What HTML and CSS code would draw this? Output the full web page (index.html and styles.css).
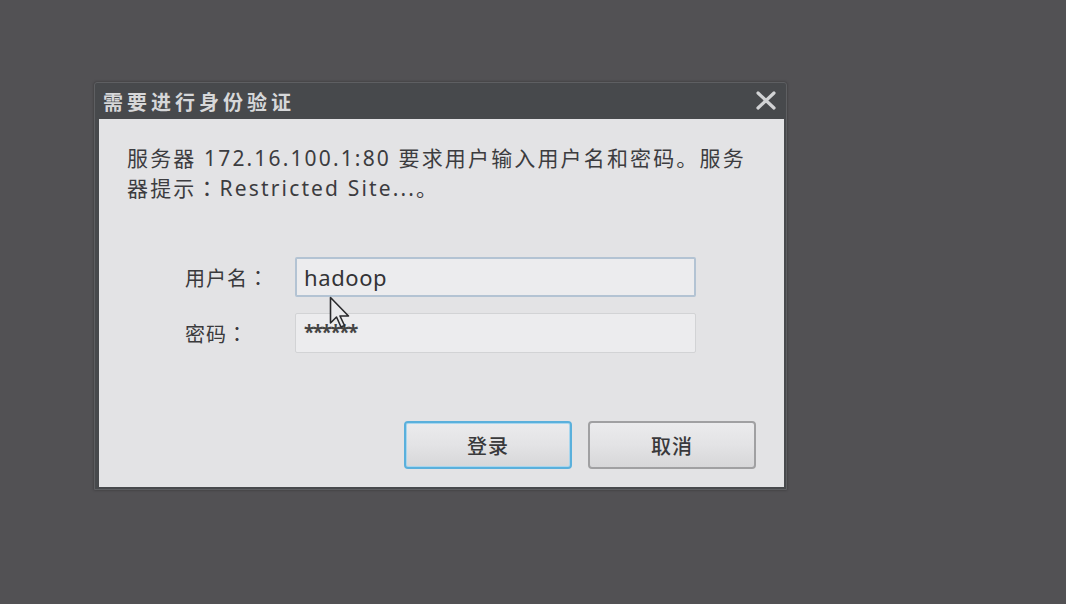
FILE: index.html
```html
<!DOCTYPE html>
<html lang="zh-CN">
<head>
<meta charset="utf-8">
<title>需要进行身份验证</title>
<link rel="stylesheet" href="styles.css">
</head>
<body>
<div class="dialog">
  <div class="titlebar">
    <span class="title">需要进行身份验证</span>
    <span class="close">
      <svg width="20" height="19" viewBox="0 0 20 19"><path d="M2 2 L18 17 M18 2 L2 17" stroke="#d2d3d5" stroke-width="3.2" stroke-linecap="round"/></svg>
    </span>
  </div>
  <div class="content">
    <p class="message"><span class="line">服务器 172.16.100.1:80 要求用户输入用户名和密码。服务</span><span class="line">器提示<span class="colon" lang="zh-TW">：</span>Restricted Site...。</span></p>
    <div class="form">
      <div class="row">
        <label class="label">用户名<span class="colon" lang="zh-TW">：</span></label>
        <div class="input focused">hadoop</div>
      </div>
      <div class="row">
        <label class="label">密码<span class="colon" lang="zh-TW">：</span></label>
        <div class="input pass">******</div>
      </div>
      <svg class="cursor" width="22" height="34" viewBox="0 0 22 34"><path d="M1.5 1.5 L1.5 27 L7.5 21 L12 31 L15.5 29.5 L11 20 L19.5 20 Z" fill="#eaeaec" stroke="#2a2a2c" stroke-width="1.6" stroke-linejoin="round"/></svg>
    </div>
    <div class="buttons">
      <button class="btn primary">登录</button>
      <button class="btn">取消</button>
    </div>
  </div>
</div>
</body>
</html>
```
FILE: styles.css
```css
html, body {
  margin: 0;
  padding: 0;
}
body {
  background: #525154;
  width: 1066px;
  height: 604px;
  overflow: hidden;
  font-family: "Noto Sans", "Noto Sans CJK SC", sans-serif;
}
.dialog {
  margin-left: 94px;
  margin-top: 82px;
  width: 693px;
  height: 408px;
  box-sizing: border-box;
  background: #47494c;
  border: 1px solid #5e5f62;
  border-radius: 3px 3px 0 0;
  padding: 0 2px 2px 4px;
  display: flex;
  flex-direction: column;
  box-shadow: 0 0 3px rgba(0,0,0,0.35);
}
.titlebar {
  height: 36px;
  display: flex;
  align-items: center;
  justify-content: space-between;
  padding: 0 8px 0 4px;
  flex: none;
}
.title {
  font-family: "Noto Sans CJK SC", sans-serif;
  color: #d6d7d9;
  font-size: 20px;
  letter-spacing: 4px;
  font-weight: 700;
}
.close {
  display: flex;
  margin-top: -2px;
}
.content {
  flex: 1;
  background: #e3e3e5;
  padding: 25px 28px 18px 28px;
  display: flex;
  flex-direction: column;
  position: relative;
}
.message {
  margin: 0;
  font-size: 21px;
  line-height: 29px;
  letter-spacing: 2.15px;
  color: #3c3c3f;
}
.line {
  display: block;
  white-space: nowrap;
}
.colon {
  font-family: "Noto Sans CJK TC", sans-serif;
}
.form {
  margin-top: 54px;
  padding-left: 58px;
  display: flex;
  flex-direction: column;
  gap: 16px;
  position: relative;
}
.row {
  display: flex;
  align-items: center;
}
.label {
  width: 110px;
  font-size: 20px;
  letter-spacing: 1px;
  color: #3a3a3c;
  font-family: "Noto Sans CJK SC", sans-serif;
}
.input {
  width: 401px;
  height: 40px;
  box-sizing: border-box;
  background: #ececee;
  border: 1px solid #d2d3d5;
  border-radius: 2px;
  padding: 0 8px;
  display: flex;
  align-items: center;
  font-size: 22px;
  color: #333336;
  letter-spacing: 0.6px;
}
.input.focused {
  border: 2px solid #b3c3d3;
  padding-left: 7px;
}
.input.pass {
  font-size: 19px;
  font-weight: 700;
  letter-spacing: -1.5px;
  align-items: flex-start;
  padding-top: 5px;
  color: #444;
}
.cursor {
  position: absolute;
  left: 202px;
  top: 39px;
}
.buttons {
  margin-top: auto;
  display: flex;
  justify-content: flex-end;
  gap: 16px;
}
.btn {
  width: 168px;
  height: 48px;
  box-sizing: border-box;
  border: 2px solid #a0a0a2;
  border-radius: 4px;
  background: linear-gradient(#ebebed 0%, #e3e3e5 50%, #d7d7d9 100%);
  font-family: "Noto Sans CJK SC", sans-serif;
  font-size: 20px;
  font-weight: 500;
  color: #39393b;
  letter-spacing: 1px;
  padding: 0;
}
.btn.primary {
  border-color: #5ab0dc;
  box-shadow: inset 0 0 0 1px #a8d6ee;
}
```
